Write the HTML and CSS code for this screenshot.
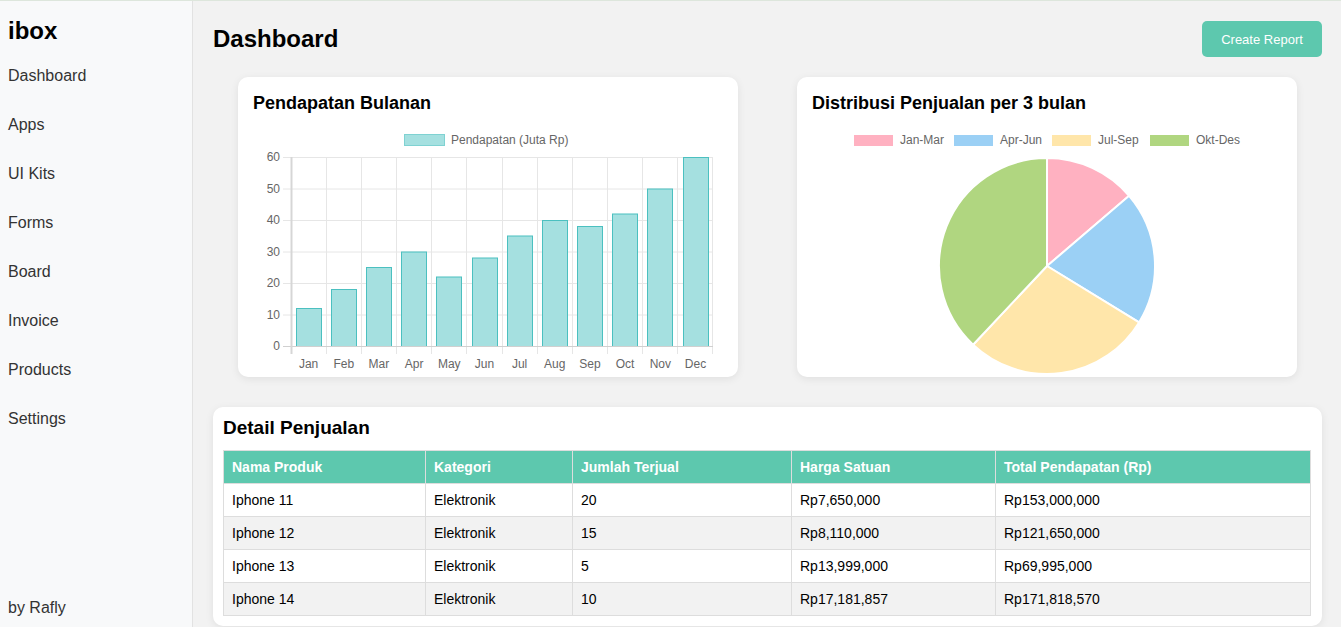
FILE: index.html
```html
<!DOCTYPE html>
<html lang="id">
<head>
<meta charset="utf-8">
<title>ibox Dashboard</title>
<link rel="stylesheet" href="styles.css">
</head>
<body>
<aside class="sidebar">
  <div class="brand">ibox</div>
  <nav class="nav">
    <a class="nav-item" href="#">Dashboard</a>
    <a class="nav-item" href="#">Apps</a>
    <a class="nav-item" href="#">UI Kits</a>
    <a class="nav-item" href="#">Forms</a>
    <a class="nav-item" href="#">Board</a>
    <a class="nav-item" href="#">Invoice</a>
    <a class="nav-item" href="#">Products</a>
    <a class="nav-item" href="#">Settings</a>
  </nav>
  <div class="author">by Rafly</div>
</aside>
<main class="main">
  <header class="page-header">
    <h1 class="page-title">Dashboard</h1>
    <button class="btn">Create Report</button>
  </header>
  <section class="charts">
    <div class="card chart-card">
      <h2 class="card-title">Pendapatan Bulanan</h2>
      <svg class="chart" width="470" height="250" viewBox="0 0 470 250">
        <rect x="151.5" y="12.5" width="40" height="11" fill="#a5e0e0" stroke="#7fd2d2" stroke-width="1"/>
        <text class="lbl" x="198" y="22">Pendapatan (Juta Rp)</text>
        <g stroke="#e6e6e6" stroke-width="1">
          <line x1="30" y1="35.5" x2="460" y2="35.5"/>
          <line x1="30" y1="67" x2="460" y2="67"/>
          <line x1="30" y1="98.5" x2="460" y2="98.5"/>
          <line x1="30" y1="130" x2="460" y2="130"/>
          <line x1="30" y1="161.5" x2="460" y2="161.5"/>
          <line x1="30" y1="193" x2="460" y2="193"/>
          <line x1="73.5" y1="35" x2="73.5" y2="232"/>
          <line x1="108.5" y1="35" x2="108.5" y2="232"/>
          <line x1="143.5" y1="35" x2="143.5" y2="232"/>
          <line x1="178.5" y1="35" x2="178.5" y2="232"/>
          <line x1="213.5" y1="35" x2="213.5" y2="232"/>
          <line x1="249.5" y1="35" x2="249.5" y2="232"/>
          <line x1="284.5" y1="35" x2="284.5" y2="232"/>
          <line x1="319.5" y1="35" x2="319.5" y2="232"/>
          <line x1="354.5" y1="35" x2="354.5" y2="232"/>
          <line x1="389.5" y1="35" x2="389.5" y2="232"/>
          <line x1="424.5" y1="35" x2="424.5" y2="232"/>
          <line x1="459.5" y1="35" x2="459.5" y2="232"/>
        </g>
        <g fill="#a5e0e0" stroke="#4bc0c0" stroke-width="1">
          <rect x="43.5" y="186.5" width="25" height="38"/>
          <rect x="78.5" y="167.5" width="25" height="57"/>
          <rect x="113.5" y="145.5" width="25" height="79"/>
          <rect x="148.5" y="130" width="25" height="94.5"/>
          <rect x="183.5" y="155" width="25" height="69.5"/>
          <rect x="219.5" y="136" width="25" height="88.5"/>
          <rect x="254.5" y="114" width="25" height="110.5"/>
          <rect x="289.5" y="98.5" width="25" height="126"/>
          <rect x="324.5" y="104.5" width="25" height="120"/>
          <rect x="359.5" y="92" width="25" height="132.5"/>
          <rect x="394.5" y="67" width="25" height="157.5"/>
          <rect x="430.5" y="35.5" width="25" height="189"/>
        </g>
        <line x1="30" y1="224.5" x2="460" y2="224.5" stroke="#d0d0d0" stroke-width="1"/>
        <line x1="38.5" y1="35" x2="38.5" y2="232" stroke="#d6d6d6" stroke-width="2"/>
        <g class="lbl" text-anchor="end">
          <text x="27" y="39">60</text>
          <text x="27" y="71">50</text>
          <text x="27" y="102">40</text>
          <text x="27" y="134">30</text>
          <text x="27" y="165">20</text>
          <text x="27" y="197">10</text>
          <text x="27" y="228">0</text>
        </g>
        <g class="lbl" text-anchor="middle">
          <text x="55.6" y="246">Jan</text>
          <text x="90.8" y="246">Feb</text>
          <text x="125.9" y="246">Mar</text>
          <text x="161.1" y="246">Apr</text>
          <text x="196.3" y="246">May</text>
          <text x="231.4" y="246">Jun</text>
          <text x="266.6" y="246">Jul</text>
          <text x="301.8" y="246">Aug</text>
          <text x="336.9" y="246">Sep</text>
          <text x="372.1" y="246">Oct</text>
          <text x="407.3" y="246">Nov</text>
          <text x="442.5" y="246">Dec</text>
        </g>
      </svg>
    </div>
    <div class="card chart-card">
      <h2 class="card-title">Distribusi Penjualan per 3 bulan</h2>
      <svg class="chart" width="470" height="250" viewBox="0 0 470 250">
        <rect x="42" y="13" width="39" height="11" fill="#ffb1c1"/>
        <text class="lbl" x="88" y="22">Jan-Mar</text>
        <rect x="142" y="13" width="39" height="11" fill="#9bd0f5"/>
        <text class="lbl" x="188" y="22">Apr-Jun</text>
        <rect x="240" y="13" width="39" height="11" fill="#ffe6aa"/>
        <text class="lbl" x="286" y="22">Jul-Sep</text>
        <rect x="338" y="13" width="39" height="11" fill="#b0d680"/>
        <text class="lbl" x="384" y="22">Okt-Des</text>
        <g stroke="#ffffff" stroke-width="2" stroke-linejoin="round">
          <path d="M235 144 L235 36 A108 108 0 0 1 317.12 73.86 Z" fill="#ffb1c1"/>
          <path d="M235 144 L317.12 73.86 A108 108 0 0 1 327.08 200.43 Z" fill="#9bd0f5"/>
          <path d="M235 144 L327.08 200.43 A108 108 0 0 1 161.07 222.73 Z" fill="#ffe6aa"/>
          <path d="M235 144 L161.07 222.73 A108 108 0 0 1 235 36 Z" fill="#b0d680"/>
        </g>
      </svg>
    </div>
  </section>
  <section class="card detail-card">
    <h2 class="detail-title">Detail Penjualan</h2>
    <table class="table">
      <thead>
        <tr>
          <th class="c1">Nama Produk</th>
          <th class="c2">Kategori</th>
          <th class="c3">Jumlah Terjual</th>
          <th class="c4">Harga Satuan</th>
          <th class="c5">Total Pendapatan (Rp)</th>
        </tr>
      </thead>
      <tbody>
        <tr><td>Iphone 11</td><td>Elektronik</td><td>20</td><td>Rp7,650,000</td><td>Rp153,000,000</td></tr>
        <tr><td>Iphone 12</td><td>Elektronik</td><td>15</td><td>Rp8,110,000</td><td>Rp121,650,000</td></tr>
        <tr><td>Iphone 13</td><td>Elektronik</td><td>5</td><td>Rp13,999,000</td><td>Rp69,995,000</td></tr>
        <tr><td>Iphone 14</td><td>Elektronik</td><td>10</td><td>Rp17,181,857</td><td>Rp171,818,570</td></tr>
      </tbody>
    </table>
  </section>
</main>
</body>
</html>
```

FILE: styles.css
```css
* { box-sizing: border-box; }
html, body { margin: 0; padding: 0; }
body {
  display: flex;
  height: 100vh;
  overflow: hidden;
  font-family: "Liberation Sans", Arial, sans-serif;
  color: #000;
  background: #f2f2f2;
  border-top: 1px solid #dde6dc;
}
.sidebar {
  width: 193px;
  flex: none;
  display: flex;
  flex-direction: column;
  background: #f8f9fa;
  border-right: 1px solid #e2e2e2;
  padding: 16px 8px 10px;
}
.brand {
  font-size: 24px;
  font-weight: bold;
  line-height: 28px;
}
.nav {
  display: flex;
  flex-direction: column;
  margin-top: 6px;
  flex: 1;
}
.nav-item {
  display: block;
  padding: 15px 0;
  font-size: 16px;
  line-height: 19px;
  color: #333;
  text-decoration: none;
}
.author {
  font-size: 16px;
  line-height: 19px;
  color: #333;
}
.main {
  flex: 1;
  padding: 20px 19px 0 20px;
  min-width: 0;
}
.page-header {
  display: flex;
  justify-content: space-between;
  align-items: center;
  height: 36px;
  margin-bottom: 20px;
}
.page-title {
  margin: 0;
  font-size: 24px;
  line-height: 28px;
  font-weight: bold;
}
.btn {
  width: 120px;
  height: 36px;
  border: none;
  border-radius: 5px;
  background: #5dc8ae;
  color: #fff;
  font-family: "Liberation Sans", Arial, sans-serif;
  font-size: 13px;
  padding: 0;
}
.charts {
  display: flex;
  justify-content: center;
  gap: 59px;
  margin-bottom: 30px;
}
.card {
  background: #fff;
  border-radius: 10px;
  box-shadow: 0 2px 8px rgba(0, 0, 0, 0.08);
}
.chart-card {
  width: 500px;
  height: 300px;
  padding: 15px;
}
.card-title {
  margin: 0 0 8px;
  font-size: 18px;
  line-height: 22px;
  font-weight: bold;
}
.chart {
  display: block;
  overflow: visible;
}
.lbl, .lbl text {
  font-family: "Liberation Sans", Arial, sans-serif;
  font-size: 12px;
  fill: #666;
}
.detail-card {
  padding: 10px 11px 10px 10px;
}
.detail-title {
  margin: 0 0 11px;
  font-size: 19px;
  line-height: 22px;
  font-weight: bold;
}
.table {
  width: 100%;
  border-collapse: collapse;
  font-size: 14px;
}
.table th, .table td {
  border: 1px solid #dddddd;
  padding: 8px;
  line-height: 16px;
  text-align: left;
}
.table th {
  background: #5dc8ae;
  color: #fff;
  font-weight: bold;
}
.table tbody tr:nth-child(even) td {
  background: #f2f2f2;
}
.c1 { width: 202px; }
.c2 { width: 147px; }
.c3 { width: 219px; }
.c4 { width: 204px; }
```
